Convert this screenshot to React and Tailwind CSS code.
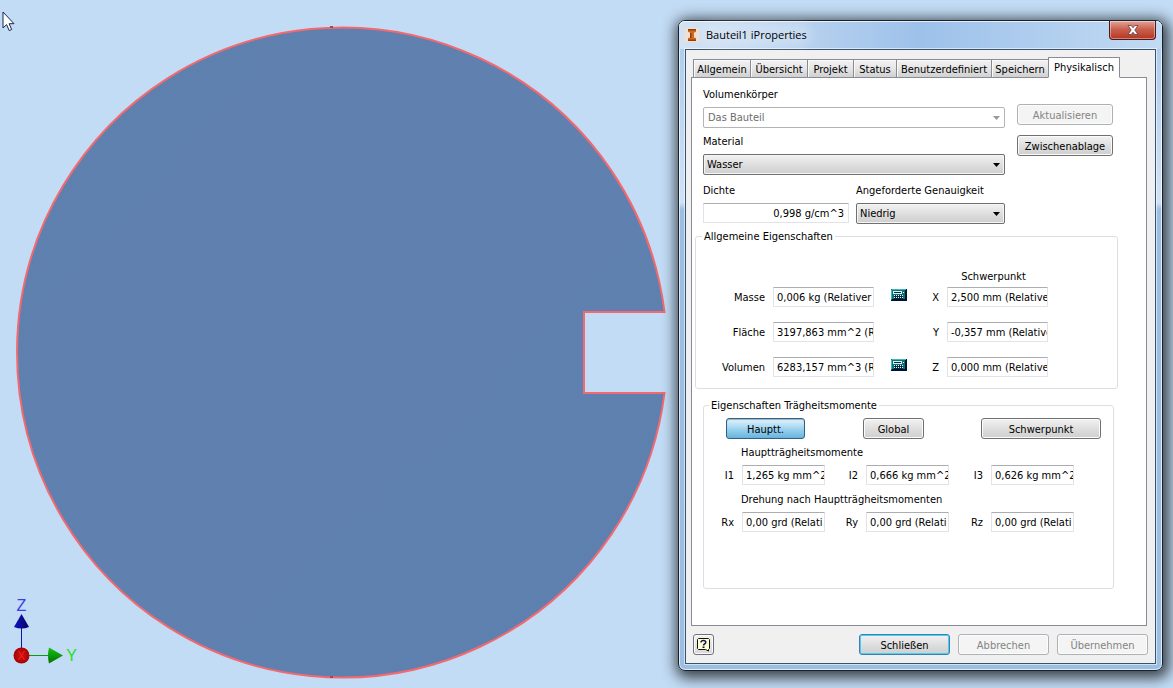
import { useId, useState } from 'react';

const TABS = [
  { name: 'Allgemein', width: 'w-[57px]' },
  { name: 'Übersicht', width: 'w-[57px]' },
  { name: 'Projekt', width: 'w-[46px]' },
  { name: 'Status', width: 'w-[43px]' },
  { name: 'Benutzerdefiniert', width: 'w-[95px]' },
  { name: 'Speichern', width: 'w-[57px]' },
  { name: 'Physikalisch', width: 'w-[72px]' },
];

const BUTTON_STYLES = {
  normal:
    'border-[#707070] bg-linear-to-b from-[#f2f2f2] from-0% via-[#dddddd] via-55% to-[#cfcfcf] text-black shadow-[inset_0_0_0_1px_#fbfbfb]',
  pressed:
    'border-[#2c628b] bg-linear-to-b from-[#e5f4fc] from-0% via-[#98d1ef] via-55% to-[#68b3db] text-black shadow-[inset_0_1px_1px_#9eb0ba]',
  focused:
    'border-[#3c7fb1] bg-linear-to-b from-[#f2f2f2] from-0% via-[#dddddd] via-55% to-[#cfcfcf] text-black shadow-[inset_0_0_0_1px_#46d0f5]',
  disabled: 'border-[#adb2b5] bg-[#f4f4f4] text-[#838383] shadow-[inset_0_0_0_1px_#fcfcfc]',
};

function Button({ kind = 'normal', className = '', children }) {
  return (
    <button
      type="button"
      disabled={kind === 'disabled'}
      className={`h-[21px] rounded-[3px] border pt-0.5 text-center leading-4 ${BUTTON_STYLES[kind]} ${className}`}
    >
      {children}
    </button>
  );
}

function Select({ id, value, disabled, className = '' }) {
  return (
    <div className={`relative ${className}`}>
      <select
        id={id}
        disabled={disabled}
        className={`block h-[21px] w-full appearance-none rounded-[2px] border pr-5 leading-[19px] ${
          disabled
            ? 'border-[#b4b4b4] bg-white pl-1 text-[#6d6d6d] opacity-100'
            : 'border-[#707070] bg-linear-to-b from-[#f2f2f2] from-0% via-[#dddddd] via-55% to-[#cfcfcf] pl-[3px] text-black shadow-[inset_0_0_0_1px_#f5f5f5]'
        }`}
      >
        <option>{value}</option>
      </select>
      <svg
        viewBox="0 0 7 4"
        className={`pointer-events-none absolute top-[9px] right-[5px] h-1 w-[7px] ${disabled ? 'fill-[#9a9a9a]' : 'fill-black'}`}
        aria-hidden="true"
      >
        <path d="M0 0h7L3.5 4z" />
      </svg>
    </div>
  );
}

const FIELD =
  'h-5 rounded-[1px] border border-[#e2e3ea] border-t-[#abadb3] bg-white leading-[18px] text-black outline-none';

function Calculator() {
  return (
    <svg viewBox="0 0 16 13" className="h-[13px] w-4" shapeRendering="crispEdges" aria-hidden="true">
      <rect width="16" height="12" fill="#02122d" />
      <rect width="15" height="11" fill="#07737d" />
      <path d="M1 0h14v1H1zM0 1h1v9H0z" fill="#45b5ba" />
      <path d="M14 1h2v11H1v-2h13z" fill="#02122d" />
      <rect x="2" y="2" width="9" height="3" fill="#d9f2f2" />
      <rect x="3" y="3" width="7" height="1" fill="#03263f" />
      <path d="M3 6h9v4H3z" fill="#032c43" />
      <path d="M3 6h1v1H3zM5 6h1v1H5zM7 6h1v1H7zM9 6h1v1H9zM11 6h1v1h-1zM3 8h1v1H3zM5 8h1v1H5zM7 8h1v1H7zM9 8h1v1H9zM11 8h1v1h-1zM12 3h1v1h-1z" fill="#fff" />
    </svg>
  );
}

function MassRow({ label, value, axis, center, calculator }) {
  const id = useId();
  return (
    <div className="flex">
      <label htmlFor={id} className="w-[77px] shrink-0 pt-px pr-2 text-right leading-5">
        {label}
      </label>
      <input id={id} readOnly defaultValue={value} className={`${FIELD} w-[101px] pl-[3px]`} />
      <div className="ml-[17px] w-4 pt-0.5">{calculator && <Calculator />}</div>
      <label htmlFor={`${id}c`} className="w-10 shrink-0 pt-px pr-2 text-right leading-5">
        {axis}
      </label>
      <input id={`${id}c`} readOnly defaultValue={center} className={`${FIELD} w-[101px] pl-[3px]`} />
    </div>
  );
}

function InertiaRow({ items }) {
  const id = useId();
  return (
    <div className="grid grid-cols-[38px_83px_41px_83px_42px_83px]">
      {items.map(([label, value], i) => (
        <div key={label} className="contents">
          <label htmlFor={id + i} className="pt-px pr-2 text-right leading-5">
            {label}
          </label>
          <input id={id + i} readOnly defaultValue={value} className={`${FIELD} w-full pl-[3px]`} />
        </div>
      ))}
    </div>
  );
}

function Viewport() {
  return (
    <svg viewBox="0 0 678 688" preserveAspectRatio="xMinYMin meet" className="min-w-0 flex-1" aria-hidden="true">
      <defs>
        <linearGradient id="face" x1="0" y1="0" x2="1" y2="1">
          <stop offset="0" stopColor="#5e80ae" />
          <stop offset="0.5" stopColor="#6081af" />
          <stop offset="1" stopColor="#5d80b0" />
        </linearGradient>
        <linearGradient id="coneZ" x1="0" x2="1">
          <stop offset="0" stopColor="#1010c8" />
          <stop offset="1" stopColor="#050560" />
        </linearGradient>
        <linearGradient id="coneY" x1="0" y1="0" x2="0" y2="1">
          <stop offset="0" stopColor="#14c414" />
          <stop offset="1" stopColor="#067006" />
        </linearGradient>
        <radialGradient id="ballX">
          <stop offset="0" stopColor="#d81010" />
          <stop offset="1" stopColor="#a30505" />
        </radialGradient>
      </defs>
      <path
        d="M664.5 312A325 325 0 1 0 664.5 393H584V312Z"
        fill="url(#face)"
        stroke="#f4696f"
        strokeWidth="2"
      />
      <path d="M330 27h3M330 677h3" stroke="#a04a5c" strokeWidth="2" />
      <path d="M3 12v16l3.6-3.4 2.6 6 2.5-1.1-2.6-5.8H14z" fill="#fff" stroke="#1b2450" />
      <path d="M21.5 628v22" stroke="#1515a0" />
      <path d="M28 655.5h22" stroke="#0c9a0c" />
      <path d="M21.5 614l7.5 13q-7.500 3-15 0z" fill="url(#coneZ)" />
      <path d="M63 655.500l-14 8q-2-8 0-16z" fill="url(#coneY)" />
      <circle cx="21.500" cy="655.500" r="8" fill="url(#ballX)" />
      <path d="M18.500 651l6 9M24.500 651l-6 9" stroke="#ff2020" />
      <text x="21.500" y="611" textAnchor="middle" fill="#3c3ce6" className="font-['Liberation_Sans',sans-serif] text-[16px]">
        Z
      </text>
      <text x="71.500" y="661" textAnchor="middle" fill="#22e022" className="font-['Liberation_Sans',sans-serif] text-[16px]">
        Y
      </text>
    </svg>
  );
}

function PhysicalPage() {
  return (
    <div role="tabpanel" className="mr-px border border-[#898c95] bg-white pb-9">
      <div className="flex pt-[9px] pl-[11px]">
        <div className="w-[302px]">
          <label htmlFor="body" className="block">Volumenkörper</label>
          <Select id="body" value="Das Bauteil" disabled className="mt-1" />
          <label htmlFor="material" className="mt-1.5 block">Material</label>
          <Select id="material" value="Wasser" className="mt-1" />
          <div className="mt-2 flex gap-[7px]">
            <div className="w-[146px]">
              <label htmlFor="density" className="block">Dichte</label>
              <input
                id="density"
                readOnly
                defaultValue="0,998 g/cm^3"
                className={`${FIELD} mt-1 block w-full px-1 text-right`}
              />
            </div>
            <div className="flex-1">
              <label htmlFor="accuracy" className="block whitespace-nowrap">Angeforderte Genauigkeit</label>
              <Select id="accuracy" value="Niedrig" className="mt-1" />
            </div>
          </div>
        </div>
        <div className="ml-3 flex w-24 flex-col gap-2.5 pt-[17px]">
          <Button kind="disabled">Aktualisieren</Button>
          <Button>Zwischenablage</Button>
        </div>
      </div>

      <fieldset className="mt-1 mr-7 ml-[3px] rounded-[3px] border border-[#dcdfe2] pb-2.5">
        <legend className="ml-1.5 px-0.5 pt-0.5 leading-[14px]">Allgemeine Eigenschaften</legend>
        <p className="mt-[25px] ml-[247px] w-[101px] text-center">Schwerpunkt</p>
        <div className="mt-0.5 flex flex-col gap-3.5">
          <MassRow label="Masse" value="0,006 kg (Relativer" axis="X" center="2,500 mm (Relative" calculator />
          <MassRow label="Fläche" value="3197,863 mm^2 (R" axis="Y" center="-0,357 mm (Relative" />
          <MassRow label="Volumen" value="6283,157 mm^3 (R" axis="Z" center="0,000 mm (Relative" calculator />
        </div>
      </fieldset>

      <fieldset className="mt-2 mr-8 ml-[11px] rounded-[3px] border border-[#dcdfe2] pb-[55px]">
        <legend className="ml-[5px] px-0.5 pt-0.5 leading-[14px]">Eigenschaften Trägheitsmomente</legend>
        <div className="flex pt-[5px] pl-[22px]">
          <Button kind="pressed" className="w-[79px]">Hauptt.</Button>
          <Button className="ml-[58px] w-[61px]">Global</Button>
          <Button className="ml-[57px] w-[120px]">Schwerpunkt</Button>
        </div>
        <p className="mt-1.5 mb-1 pl-[37px]">Hauptträgheitsmomente</p>
        <InertiaRow
          items={[
            ['I1', '1,265 kg mm^2'],
            ['I2', '0,666 kg mm^2'],
            ['I3', '0,626 kg mm^2'],
          ]}
        />
        <p className="mt-1.5 mb-1 pl-[37px]">Drehung nach Hauptträgheitsmomenten</p>
        <InertiaRow
          items={[
            ['Rx', '0,00 grd (Relati'],
            ['Ry', '0,00 grd (Relati'],
            ['Rz', '0,00 grd (Relati'],
          ]}
        />
      </fieldset>
    </div>
  );
}

function PropertiesDialog() {
  const [active, setActive] = useState('Physikalisch');
  return (
    <section
      role="dialog"
      aria-labelledby="dialog-title"
      className="relative mt-5 mr-[10px] w-[485px] shrink-0 rounded-[7px] border border-[#17202c] bg-linear-to-b from-[#a9c9ec] from-0% via-[#d0e2f5] via-28% to-[#9bbfe3] to-29% px-1.5 pb-1.5 shadow-[2px_3px_14px_4px_rgba(0,0,0,0.7),inset_0_0_0_1px_rgba(255,255,255,0.7)]"
    >
      <header className="-mx-1.5 flex h-7 items-start justify-between rounded-t-[6px] bg-linear-to-r from-[#d3e3f3] from-0% via-[#9dc1ea] via-50% to-[#c2daf2] px-1.5 shadow-[inset_0_1px_0_rgba(255,255,255,0.7)]">
        <div className="flex items-center gap-[7px] pt-1.5">
          <svg viewBox="0 0 14 14" className="size-[14px]" aria-hidden="true">
            <rect width="14" height="14" rx="1" fill="#f3dfcf" />
            <path d="M3 1h8v3l-2 .6v4.800L11 10v3H3v-3l2-.6V4.600L3 4z" fill="#d2691f" />
            <path d="M3 1h8v1.500H3zM5 5h1.500v5H5zM3 11.500h8V13H3z" fill="#8f3f0e" />
          </svg>
          <h1 id="dialog-title" className="rounded-full bg-white/20 font-['Open_Sans','Noto_Sans',sans-serif] text-[11px] leading-4 shadow-[0_0_8px_5px_rgba(255,255,255,0.2)]">
            Bauteil1 iProperties
          </h1>
        </div>
        <button
          type="button"
          aria-label="Schließen"
          className="flex h-[19px] w-[47px] items-center justify-center rounded-b-[4px] border border-t-0 border-[#4c1a1c] bg-linear-to-b from-[#e3a497] from-0% via-[#c9614f] via-45% to-[#b8321f] shadow-[inset_0_0_0_1px_rgba(255,255,255,0.4)]"
        >
          <svg viewBox="0 0 12 10" className="h-2.5 w-3" aria-hidden="true">
            <path
              d="M1 .5h3.200L6 2.700 7.800.5H11L7.800 5 11 9.500H7.800L6 7.300 4.200 9.500H1L4.200 5z"
              fill="#fff"
              stroke="#59404a"
              strokeWidth=".8"
            />
          </svg>
        </button>
      </header>

      <div className="border border-[#38536f] bg-[#f0f0f0] pt-[7px] pr-[7px] pb-2 pl-[5px] shadow-[0_0_0_1px_rgba(255,255,255,0.55)]">
        <div role="tablist" className="flex items-end pl-0.5">
          {TABS.map(({ name, width }) => (
            <button
              key={name}
              type="button"
              role="tab"
              aria-selected={active === name}
              onClick={() => setActive(name)}
              className={`-mb-px whitespace-nowrap border border-[#898c95] ${width} ${
                active === name
                  ? 'relative h-[21px] border-b-white bg-white'
                  : 'h-[19px] border-r-0 bg-linear-to-b from-[#f2f2f2] from-0% via-[#e6e6e6] via-50% to-[#d0d0d0] pt-0.5 shadow-[inset_1px_1px_0_#fafafa]'
              }`}
            >
              {name}
            </button>
          ))}
        </div>
        <PhysicalPage />
        <footer className="mt-2 flex gap-2 pl-0.5">
          <button
            type="button"
            aria-label="Hilfe"
            className="mr-auto flex size-[21px] items-center justify-center rounded-[3px] border border-[#707078] bg-linear-to-b from-[#f2f2f2] to-[#d8d8d8] shadow-[inset_0_0_0_1px_#fbfbfb]"
          >
            <svg viewBox="0 0 15 15" className="size-[15px]" aria-hidden="true">
              <path d="M2.500 1.500h10l1 1v9l-1 1V14l-3-1.500h-7l-1-1v-9z" fill="#ffffd2" stroke="#111" />
              <path d="M5 5.500V4.800Q5.300 3.500 7.300 3.500q2.500 0 2.500 1.800 0 1-1.300 1.700-1 .6-1 1.500" fill="none" stroke="#16164d" strokeWidth="1.500" />
              <rect x="6.500" y="9.500" width="2" height="1.500" fill="#16164d" />
            </svg>
          </button>
          <Button kind="focused" className="w-[91px]">Schließen</Button>
          <Button kind="disabled" className="w-[91px]">Abbrechen</Button>
          <Button kind="disabled" className="w-[91px]">Übernehmen</Button>
        </footer>
      </div>
    </section>
  );
}

export default function App() {
  return (
    <main className="flex min-h-screen items-start overflow-hidden bg-[#c2dcf5] font-['DejaVu_Sans_Condensed','Noto_Sans',sans-serif] text-[11px] leading-4 text-black">
      <Viewport />
      <PropertiesDialog />
    </main>
  );
}
